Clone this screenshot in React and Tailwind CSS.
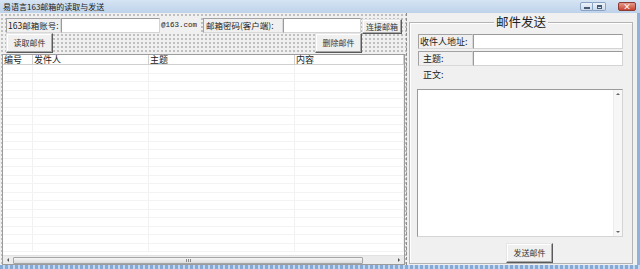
import React from "react";

const cols = [
  { name: "编号", w: "w-[30px]" },
  { name: "发件人", w: "w-[116px]" },
  { name: "主题", w: "w-[146px]" },
  { name: "内容", w: "flex-1" },
];

const Label = ({ children, className = "" }) => (
  <div
    className={`h-[15px] flex items-center border border-[#a2a2a2] border-b-[#d8d8d8] border-r-[#d8d8d8] bg-[#f0f0f0] leading-none text-[#222] whitespace-nowrap overflow-hidden ${className}`}
  >
    {children}
  </div>
);

const Input = ({ className = "" }) => (
  <div
    className={`h-[15px] bg-white border border-[#9a9a9a] border-b-[#d4d4d4] border-r-[#d4d4d4] ${className}`}
  />
);

const Btn = ({ children, className = "" }) => (
  <div
    className={`flex items-center justify-center bg-[#f0f0f0] border border-t-[#e6e6e6] border-l-[#e6e6e6] border-r-[#5a5a5a] border-b-[#5a5a5a] shadow-[inset_-1px_-1px_0_#a8a8a8,inset_1px_1px_0_#ffffff] text-[8px] leading-none text-[#333] whitespace-nowrap ${className}`}
  >
    {children}
  </div>
);

const dots =
  "bg-[#f0f0f0] bg-[radial-gradient(circle,#a4a4a4_0.6px,transparent_0.9px)] bg-size-[4px_4px]";

export default function App() {
  const rows = Array.from({ length: 22 });

  return (
    <div className="w-[640px] h-[269px] overflow-hidden flex flex-col bg-[#f0f0f0] font-['Noto_Sans_CJK_SC','Liberation_Sans',sans-serif]">
      {/* title bar */}
      <div className="h-[13px] shrink-0 flex items-center bg-gradient-to-b from-[#d6e4f3] to-[#bdd2ea]">
        <span className="ml-[3px] text-[8px] leading-none text-[#1a1a1a]">
          易语言163邮箱的读取与发送
        </span>
        <div className="ml-auto mr-[4px] flex items-center">
          <div className="w-[13px] h-[9px] flex items-center justify-center border border-[#8aa3c2] rounded-l-[2px] bg-gradient-to-b from-[#eef3f9] to-[#cbdaec]">
            <div className="w-[6px] h-[2px] mt-[3px] bg-[#4a5a70]" />
          </div>
          <div className="w-[13px] h-[9px] flex items-center justify-center border border-l-0 border-[#8aa3c2] rounded-r-[2px] bg-gradient-to-b from-[#eef3f9] to-[#cbdaec]">
            <div className="w-[5px] h-[4px] border border-[#4a5a70] border-t-2" />
          </div>
          <div className="ml-[12px] w-[18px] h-[9px] flex items-center justify-center rounded-[2px] border border-[#8d3a30] bg-gradient-to-b from-[#e59a8c] to-[#c7432f] text-white text-[8px] font-bold leading-none">
            ×
          </div>
        </div>
      </div>

      {/* body */}
      <div className="flex-1 flex min-h-0">
        {/* left designer area */}
        <div className={`w-[407px] flex flex-col border-r border-dashed border-[#8c8c8c] ${dots}`}>
          <div className="mt-[5px] h-[15px] flex">
            <Label className="ml-[6px] w-[55px] pl-[1px] text-[8.5px]">163邮箱账号:</Label>
            <Input className="w-[99px]" />
            <div className="w-[39px] h-[15px] flex items-center pl-[1px] bg-[#f0f0f0] font-['Liberation_Mono',monospace] text-[7.5px] leading-none text-[#222]">
              @163.com
            </div>
            <Label className="ml-[4px] w-[80px] pl-[2px] text-[8.5px]">邮箱密码(客户端):</Label>
            <Input className="w-[78px]" />
            <Btn className="ml-[1px] mt-[1px] w-[40px] h-[15px]">连接邮箱</Btn>
          </div>
          <div className="h-[20px] flex">
            <Btn className="ml-[6px] w-[47px] h-[20px]">读取邮件</Btn>
            <Btn className="ml-[262px] w-[47px] h-[20px]">删除邮件</Btn>
          </div>

          {/* list */}
          <div className="mt-[1px] ml-[2px] w-[403px] flex-1 flex flex-col bg-white border border-[#9c9c9c] min-h-0">
            <div className="h-[10px] shrink-0 flex border-b border-[#d0d0d0]">
              {cols.map((c) => (
                <div
                  key={c.name}
                  className={`${c.w} h-full flex items-center pl-[1px] border-r border-[#d0d0d0] text-[9px] leading-none text-[#222]`}
                >
                  {c.name}
                </div>
              ))}
            </div>
            <div className="flex-1 overflow-hidden min-h-0">
              {rows.map((_, i) => (
                <div key={i} className="h-[8.5px] flex border-b border-[#f3f3f3]">
                  {cols.map((c) => (
                    <div key={c.name} className={`${c.w} h-full border-r border-[#f1f1f1]`} />
                  ))}
                </div>
              ))}
            </div>
            <div className="h-[9px] shrink-0 flex items-center bg-[#ececec] border-t border-[#e2e2e2]">
              <div className="w-[10px] flex justify-center">
                <div className="w-0 h-0 border-y-[2px] border-y-transparent border-r-[2px] border-r-[#555]" />
              </div>
              <div className="w-[350px] h-[7px] flex items-center justify-center rounded-[1px] border border-[#a5a5a5] bg-gradient-to-b from-[#f6f6f6] to-[#dcdcdc]">
                <div className="w-[5px] h-[3px] border-x border-[#8a8a8a] bg-[linear-gradient(90deg,transparent_1px,#8a8a8a_1px,#8a8a8a_2px,transparent_2px)]" />
              </div>
              <div className="flex-1" />
              <div className="w-[10px] flex justify-center">
                <div className="w-0 h-0 border-y-[2px] border-y-transparent border-l-[2px] border-l-[#555]" />
              </div>
            </div>
          </div>
        </div>

        {/* right: send panel */}
        <div className="flex-1 flex flex-col">
          <div className="relative mt-[9px] ml-[2px] w-[224px] h-[242px] border border-[#b4b4b4] shadow-[inset_1px_1px_0_#ffffff]">
            <div className="absolute left-0 right-0 -top-[8px] flex justify-center">
              <span className="px-[2px] bg-[#f0f0f0] text-[12.5px] leading-[14px] text-[#222]">
                邮件发送
              </span>
            </div>
            <div className="mt-[11px] ml-[8px] flex">
              <Label className="w-[55px] pl-[1px] text-[9px]">收件人地址:</Label>
              <Input className="w-[150px]" />
            </div>
            <div className="mt-[2px] ml-[8px] flex">
              <Label className="w-[55px] pl-[4px] text-[9px]">主题:</Label>
              <Input className="w-[150px]" />
            </div>
            <div className="mt-[2px] ml-[13px] h-[12px] flex items-center text-[9px] leading-none text-[#222]">
              正文:
            </div>
            <div className="mt-[9px] ml-[7px] w-[206px] h-[148px] flex bg-white border border-[#9a9a9a] border-b-[#d4d4d4] border-r-[#d4d4d4]">
              <div className="flex-1" />
              <div className="w-[9px] flex flex-col items-center justify-between py-[3px] bg-[#f7f7f7] border-l border-[#ececec]">
                <div className="w-0 h-0 border-x-[2px] border-x-transparent border-b-[2px] border-b-[#666]" />
                <div className="w-0 h-0 border-x-[2px] border-x-transparent border-t-[2px] border-t-[#666]" />
              </div>
            </div>
            <Btn className="mt-[6px] ml-[96px] w-[47px] h-[20px]">发送邮件</Btn>
          </div>
        </div>
        <div className="w-[3px] bg-[#8db2dd]" />
      </div>

      {/* bottom frame */}
      <div className="h-[4px] shrink-0 bg-[repeating-linear-gradient(90deg,#86aad6_0px,#86aad6_3px,#c4d7ee_3px,#c4d7ee_5px)]" />
    </div>
  );
}
